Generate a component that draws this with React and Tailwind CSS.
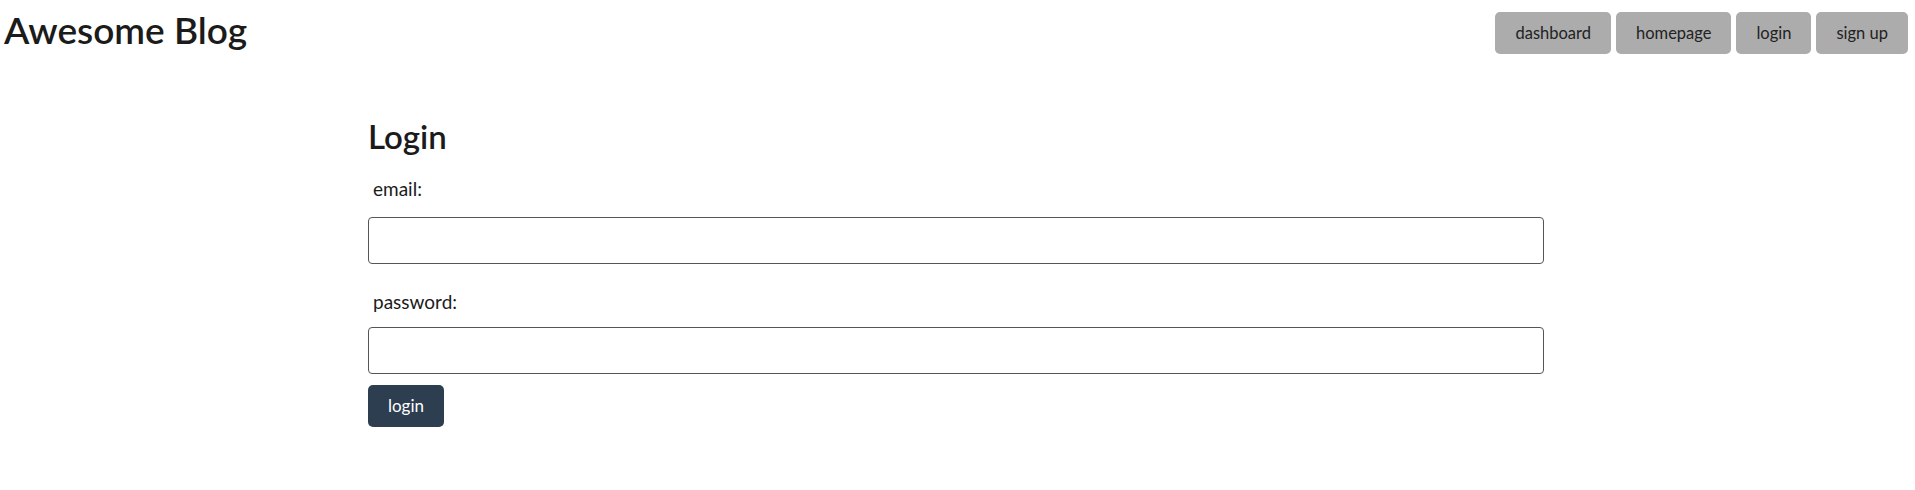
import React from 'react';

const navLinks = ['dashboard', 'homepage', 'login', 'sign up'];

export default function App() {
    return (
        <div className="min-h-[490px] bg-white text-[#1b1b1b] font-['Lato',sans-serif]">
            {/* top bar */}
            <header className="flex items-start justify-between pl-[4px] pr-[7px]">
                <h1 className="text-[37px] leading-[48px] font-semibold mt-[6px]">Awesome Blog</h1>
                <nav className="flex gap-[5px] mt-[12px]">
                    {navLinks.map(link => (
                        <button
                            key={link}
                            className="h-[42px] px-[20px] rounded-[5px] bg-[#acacac] text-[16.5px] text-[#222]">
                            {link}
                        </button>
                    ))}
                </nav>
            </header>

            {/* login form */}
            <main className="w-[1176px] ml-[368px] mt-[64px]">
                <h2 className="text-[33px] leading-[36px] font-semibold">Login</h2>
                <form className="flex flex-col" onSubmit={e => e.preventDefault()}>
                    <label className="pl-[5px] mt-[23px] text-[19px] leading-[24px]">email:</label>
                    <input type="email" className="mt-[16px] h-[47px] rounded-[4px] border border-[#555] px-3" />
                    <label className="pl-[5px] mt-[26px] text-[19px] leading-[24px]">password:</label>
                    <input type="password" className="mt-[13px] h-[47px] rounded-[4px] border border-[#555] px-3" />
                    <div>
                        <button className="mt-[11px] h-[42px] px-[20px] rounded-[5px] bg-[#2c3e50] text-white text-[17px]">
                            login
                        </button>
                    </div>
                </form>
            </main>
        </div>
    );
}
